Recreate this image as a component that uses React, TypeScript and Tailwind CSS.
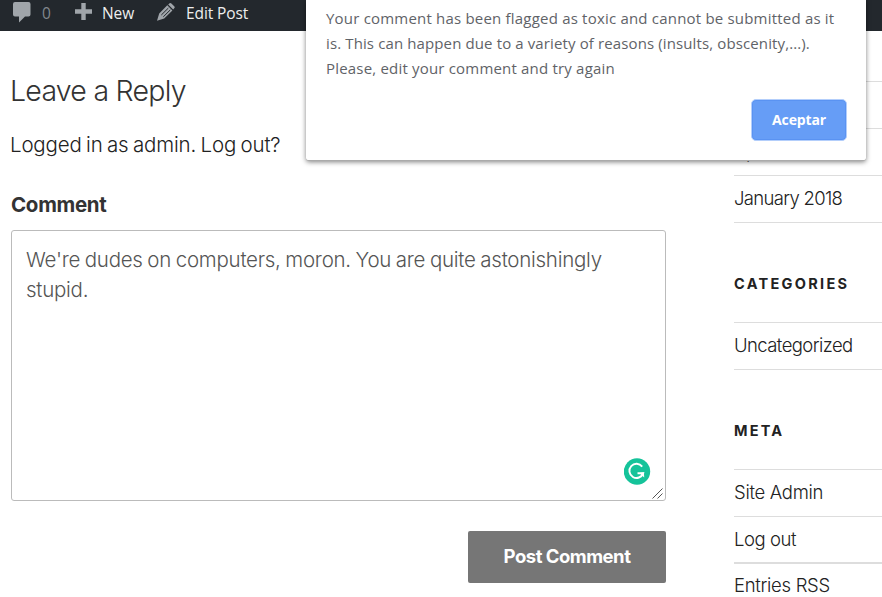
import React from "react";

const AdminBar = () => (
  <header className="flex h-[31px] items-start bg-[#23282d] font-['Open_Sans','Noto_Sans',sans-serif] text-[15.5px] leading-[26px] tracking-[-0.1px] text-[#eeeeee]">
    <div className="flex w-[75px] shrink-0 pl-[13px]">
      <svg className="mt-[2px] h-[21px] w-[18px]" viewBox="0 0 18 21" fill="#a0a5aa">
        <path d="M2 0h13.500a2 2 0 0 1 2 2v10.500a2 2 0 0 1-2 2h-3.500L6 20.500v-6H2a2 2 0 0 1-2-2V2a2 2 0 0 1 2-2z" />
      </svg>
      <span className="ml-[11px] text-[#82878c]">0</span>
    </div>
    <div className="flex w-[82px] shrink-0">
      <svg className="mt-[3px] h-[17px] w-[17px]" viewBox="0 0 17 17" fill="#a0a5aa">
        <path d="M6.300 0h4.400v6.300H17v4.400h-6.300V17H6.300v-6.300H0V6.300h6.300z" />
      </svg>
      <span className="ml-[10px]">New</span>
    </div>
    <div className="flex">
      <svg className="mt-[3px] h-[18px] w-[18px]" viewBox="0 0 18 18">
        <path d="M11.200 1.500 12.600.3q.9-.6 1.800.2l2.800 2.800q.9.900.2 1.800l-1.200 1.400zM10.300 2.300l5.100 5.100-8.200 8L0 17.800l2.200-7.200z" fill="#a0a5aa" />
        <path d="m4.300 12 7-6.900M6.300 13.800l7-6.900" stroke="#23282d" strokeWidth="1" />
      </svg>
      <span className="ml-[11px]">Edit Post</span>
    </div>
  </header>
);

const GrammarBadge = () => (
  <svg className="absolute bottom-[15px] right-[14px] h-[27px] w-[27px]" viewBox="0 0 27 27" fill="none">
    <circle cx="13" cy="13.500" r="13.200" fill="#15c39a" />
    <path d="M18.200 8.600A7.100 7.100 0 1 0 19.200 15.200H13.500" stroke="#fff" strokeWidth="1.900" />
    <path d="m15.300 15.100 4.600-.9.300 5.200z" fill="#fff" />
  </svg>
);

const CommentForm = () => (
  <main className="ml-[11px] w-[655px] shrink-0 text-[#222]">
    <h2 className="-ml-px mt-[40px] h-[40px] whitespace-nowrap text-[28.5px] font-light leading-[40px] tracking-[-0.75px] text-[#333]">Leave a Reply</h2>
    <p className="-ml-px mt-[19px] h-[30px] whitespace-nowrap text-[20.5px] font-light leading-[30px] tracking-[-0.18px] [word-spacing:-1.1px]">Logged in as admin. Log out?</p>
    <label className="mt-[30px] block h-[30px] text-[20.5px] font-bold leading-[30px] tracking-[-0.3px] text-[#333]">Comment</label>
    <div className="relative mt-[10px] h-[271px] rounded-[3px] border border-[#bbb] bg-white px-[14px] pt-[14px] text-[20.5px] font-light leading-[30px] tracking-[-0.26px] text-[#555]">
      <p className="whitespace-nowrap [word-spacing:-0.8px]">We're dudes on computers, moron. You are quite astonishingly</p>
      <p>stupid.</p>
      <GrammarBadge />
      <svg className="absolute bottom-[1px] right-[2px] h-[11px] w-[11px]" viewBox="0 0 11 11" stroke="#555" strokeWidth="1">
        <path d="m.5 10.500 10-10M5.500 10.500l5-5" />
      </svg>
    </div>
    <button className="ml-auto mt-[30px] block h-[52px] w-[198px] rounded-[2px] bg-[#767676] pb-[2px] text-[18.5px] font-bold leading-[48px] tracking-[-0.5px] text-white">Post Comment</button>
  </main>
);

const Row = ({ children }: { children?: React.ReactNode }) => (
  <li className="h-[47px] whitespace-nowrap border-b border-[#ddd] leading-[44px]">{children}</li>
);

const Sidebar = () => (
  <aside className="ml-[68px] w-[148px] shrink-0 text-[18.5px] font-light tracking-[-0.5px] text-[#222]">
    <ul className="mt-[4px]">
      <Row />
      <Row />
      <Row>April 2018</Row>
      <Row>
        <span className="tracking-[-0.68px]">January 2018</span>
      </Row>
    </ul>
    <h3 className="mt-[51px] h-[20px] text-[14.5px] font-bold leading-[20px] tracking-[2.3px]">CATEGORIES</h3>
    <ul className="mt-[28px] border-t border-[#ddd]">
      <Row>
        <span className="tracking-[-0.58px]">Uncategorized</span>
      </Row>
    </ul>
    <h3 className="mt-[51px] h-[20px] text-[14.5px] font-bold leading-[20px] tracking-[2.2px]">META</h3>
    <ul className="mt-[28px] border-t border-[#ddd]">
      <Row>
        <span className="tracking-[-0.3px]">Site Admin</span>
      </Row>
      <li className="h-[47px] border-b-2 border-[#ddd] leading-[44px] tracking-[-0.45px]">Log out</li>
      <li className="h-[33px] whitespace-nowrap leading-[42px] tracking-[-0.3px]">Entries RSS</li>
    </ul>
  </aside>
);

const AlertDialog = () => (
  <div role="alertdialog" className="absolute left-[306px] top-0 h-[161px] w-[560px] rounded-b-[3px] border-b border-[#aaa] bg-white pl-[20px] pr-[19px] pt-[6px] font-['Open_Sans','Noto_Sans',sans-serif] shadow-[0_1px_5px_rgba(0,0,0,0.5)]">
    <div className="whitespace-nowrap text-[15px] leading-[25px] text-[#5f6368]">
      <p className="tracking-[0.2px]">Your comment has been flagged as toxic and cannot be submitted as it</p>
      <p className="tracking-[0.12px]">is. This can happen due to a variety of reasons (insults, obscenity,...).</p>
      <p className="tracking-[0.19px]">Please, edit your comment and try again</p>
    </div>
    <button className="ml-auto mt-[18px] block h-[42px] w-[96px] rounded-[5px] border border-[#b3cefb] bg-[#669df6] text-[14px] font-bold leading-[40px] tracking-[-0.15px] text-white shadow-[inset_0_0_0_1px_#5a93f2]">Aceptar</button>
  </div>
);

export default function App() {
  return (
    <div className="relative h-[597px] w-[882px] overflow-hidden bg-white font-[Inter,'Liberation_Sans',sans-serif]">
      <AdminBar />
      <div className="flex items-start">
        <CommentForm />
        <Sidebar />
      </div>
      <AlertDialog />
    </div>
  );
}
